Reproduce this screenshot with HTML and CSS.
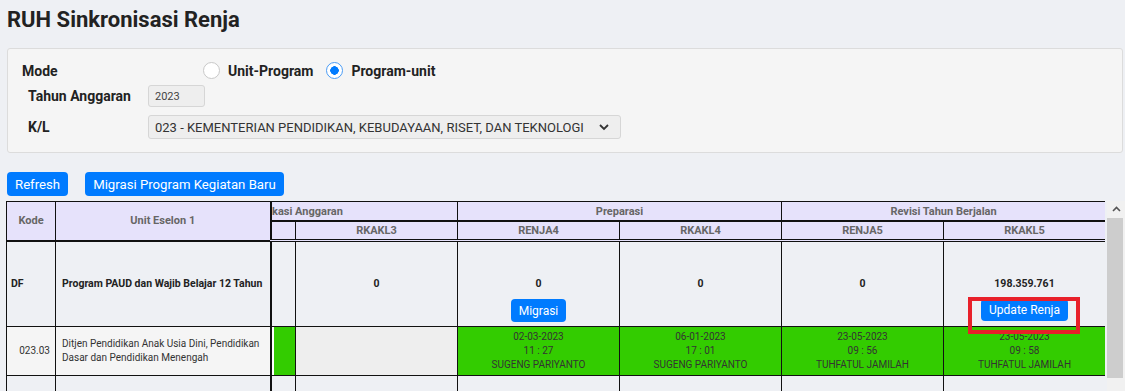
FILE: index.html
```html
<!DOCTYPE html>
<html lang="id">
<head>
    <meta charset="UTF-8">
    <meta name="viewport" content="width=device-width, initial-scale=1.0">
    <title>RUH Sinkronisasi Renja</title>
    <link rel="stylesheet" href="styles.css">
</head>
<body>

    <h1 class="pageTitle">RUH Sinkronisasi Renja</h1>

    <div class="filterPanel">
        <div class="modeRow">
            <span class="modeLabel">Mode</span>
            <label class="radioOpt"><input type="radio" name="mode"> Unit-Program</label>
            <label class="radioOpt"><input type="radio" name="mode" checked> Program-unit</label>
        </div>
        <div class="fieldRow">
            <label class="fieldLabel">Tahun Anggaran</label>
            <input type="text" class="yearInput" value="2023" readonly>
        </div>
        <div class="fieldRow">
            <label class="fieldLabel">K/L</label>
            <div class="selectBox">
                <span>023 - KEMENTERIAN PENDIDIKAN, KEBUDAYAAN, RISET, DAN TEKNOLOGI</span>
                <svg width="12" height="8" viewBox="0 0 12 8"><path d="M2 2l4 4 4-4" fill="none" stroke="#333" stroke-width="1.8"/></svg>
            </div>
        </div>
    </div>

    <div class="actions">
        <button class="btn">Refresh</button>
        <button class="btn">Migrasi Program Kegiatan Baru</button>
    </div>

    <div class="gridWrap">
        <div class="gridScroll">
            <table class="grid">
                <colgroup>
                    <col style="width:49px">
                    <col style="width:215px">
                    <col style="width:25px">
                    <col style="width:162px">
                    <col style="width:162px">
                    <col style="width:162px">
                    <col style="width:162px">
                    <col style="width:162px">
                </colgroup>
                <thead>
                    <tr class="headTop">
                        <th rowspan="2">Kode</th>
                        <th rowspan="2" class="frozenEdge">Unit Eselon 1</th>
                        <th colspan="2" class="clipHead"><div><span>Alokasi Anggaran</span></div></th>
                        <th colspan="2">Preparasi</th>
                        <th colspan="2">Revisi Tahun Berjalan</th>
                    </tr>
                    <tr class="headSub">
                        <th></th>
                        <th>RKAKL3</th>
                        <th>RENJA4</th>
                        <th>RKAKL4</th>
                        <th>RENJA5</th>
                        <th>RKAKL5</th>
                    </tr>
                </thead>
                <tbody>
                    <tr class="programRow">
                        <td class="kode">DF</td>
                        <td class="unit frozenEdge">Program PAUD dan Wajib Belajar 12 Tahun</td>
                        <td></td>
                        <td class="amount"><div class="val">0</div></td>
                        <td class="amount"><div class="val">0</div><button class="btn btnSmall">Migrasi</button></td>
                        <td class="amount"><div class="val">0</div></td>
                        <td class="amount"><div class="val">0</div></td>
                        <td class="amount"><div class="val">198.359.761</div><div class="marked"><button class="btn btnSmall">Update Renja</button></div></td>
                    </tr>
                    <tr class="unitRow">
                        <td class="kode">023.03</td>
                        <td class="unit frozenEdge">Ditjen Pendidikan Anak Usia Dini, Pendidikan Dasar dan Pendidikan Menengah</td>
                        <td class="ok gap"></td>
                        <td class="empty"></td>
                        <td class="ok">02-03-2023<br>11 : 27<br>SUGENG PARIYANTO</td>
                        <td class="ok">06-01-2023<br>17 : 01<br>SUGENG PARIYANTO</td>
                        <td class="ok">23-05-2023<br>09 : 56<br>TUHFATUL JAMILAH</td>
                        <td class="ok">23-05-2023<br>09 : 58<br>TUHFATUL JAMILAH</td>
                    </tr>
                    <tr class="blankRow">
                        <td></td>
                        <td class="frozenEdge"></td>
                        <td></td>
                        <td></td>
                        <td></td>
                        <td></td>
                        <td></td>
                        <td></td>
                    </tr>
                </tbody>
            </table>
        </div>
        <div class="scrollbar">
            <div class="sbArrow">
                <svg width="9" height="6" viewBox="0 0 9 6"><path d="M1 5l3.5-3.5L8 5" fill="none" stroke="#555" stroke-width="1.6"/></svg>
            </div>
            <div class="sbThumb"></div>
        </div>
    </div>

</body>
</html>
```

FILE: styles.css
```css
body {
    font-family: Roboto, "Liberation Sans", sans-serif;
    margin: 0;
    padding: 0 0 0 6px;
    background-color: #eef0f4;
    color: #222222;
    height: 391px;
    overflow: hidden;
}

.pageTitle {
    font-size: 22px;
    font-weight: 700;
    line-height: 28px;
    margin: 0;
    padding: 6px 0 0 1px;
    height: 42px;
    color: #222222;
}

.filterPanel {
    margin: 0 2px 0 1px;
    padding: 13px 14px 13px 14px;
    background-color: #f5f5f5;
    border: 1px solid #dcdcdc;
    border-radius: 3px;
}

.modeRow {
    display: flex;
    align-items: center;
    height: 17px;
    font-size: 14px;
    font-weight: 700;
}

.modeLabel {
    width: 181px;
}

.radioOpt {
    display: flex;
    align-items: center;
    gap: 8px;
    margin-right: 13px;
}

.radioOpt input {
    appearance: none;
    width: 17px;
    height: 17px;
    margin: 0;
    border: 1px solid #c8c8c8;
    border-radius: 50%;
    background: #ffffff;
}

.radioOpt input:checked {
    border-color: #4a9cf5;
    background: radial-gradient(circle, #007bff 0 4px, #ffffff 4.5px);
}

.fieldRow {
    display: flex;
    align-items: center;
    padding-left: 6px;
    margin-top: 6px;
}

.fieldRow + .fieldRow {
    margin-top: 8px;
}

.fieldLabel {
    width: 120px;
    font-size: 14px;
    font-weight: 700;
}

.yearInput {
    width: 57px;
    height: 22px;
    box-sizing: border-box;
    padding: 0 6px;
    font-family: Roboto, sans-serif;
    font-size: 11px;
    color: #444444;
    background: #eeeeee;
    border: 1px solid #d6d6d6;
    border-radius: 3px;
}

.selectBox {
    width: 473px;
    height: 24px;
    box-sizing: border-box;
    display: flex;
    align-items: center;
    justify-content: space-between;
    padding: 0 10px 0 6px;
    font-size: 13px;
    color: #333333;
    background: #eeeeee;
    border: 1px solid #d6d6d6;
    border-radius: 3px;
}

.actions {
    display: flex;
    gap: 17px;
    margin: 19px 0 0 1px;
}

.btn {
    font-family: Roboto, sans-serif;
    font-size: 13.2px;
    color: #ffffff;
    background-color: #007bff;
    border: none;
    border-radius: 4px;
    height: 24px;
    padding: 0 8px;
}

/* Grid */
.gridWrap {
    display: flex;
    margin-top: 5px;
    height: 190px;
}

.gridScroll {
    width: 1099px;
    overflow: hidden;
}

.grid {
    width: 1099px;
    table-layout: fixed;
    border-collapse: collapse;
    font-size: 10.5px;
}

.grid th,
.grid td {
    border: 1px solid #111111;
    padding: 0;
    text-align: center;
}

.grid th {
    background-color: #e6e2fb;
    color: #666666;
    font-weight: 700;
    font-size: 11px;
}

.headTop th {
    height: 18px;
    border-bottom-width: 2px;
}

.headSub th {
    height: 17px;
    border-bottom: 3px double #111111;
}

.frozenEdge {
    border-right: 2px solid #111111 !important;
}

.clipHead div {
    overflow: hidden;
    white-space: nowrap;
    text-align: left;
}

.clipHead span {
    margin-left: -16px;
}

.programRow td {
    font-weight: 700;
    color: #222222;
}

.kode {
    text-align: left !important;
    padding-left: 4px !important;
}

.unit {
    text-align: left !important;
    padding: 0 6px !important;
}

.amount {
    vertical-align: top;
    padding: 35px 0 4px 0 !important;
    height: 84px;
    box-sizing: border-box;
}

.val {
    line-height: 14px;
    height: 14px;
}

.btnSmall {
    display: block;
    font-size: 12px;
    height: 23px;
    margin: 8px auto 0 auto;
}

.marked {
    position: relative;
    width: fit-content;
    margin: 0 auto;
}

.marked .btnSmall {
    height: 22px;
}

/* annotation frame round the button */
.marked::after {
    content: "";
    position: absolute;
    top: -2px;
    left: -13px;
    right: -12px;
    bottom: -13px;
    border: 4px solid #e8202a;
}

.unitRow td {
    height: 48px;
    font-size: 10px;
    line-height: 14px;
    color: #333333;
    background-color: #f5f5f5;
}

.unitRow .kode {
    text-align: right !important;
    padding-right: 5px !important;
}

.unitRow .ok {
    background-color: #33cc00;
}

.unitRow .gap {
    box-shadow: inset 2px 0 0 #ffffff;
}

.unitRow .empty {
    background-color: #eeeeee;
}

.blankRow td {
    height: 40px;
}

/* Scrollbar */
.scrollbar {
    width: 18px;
    margin-left: 2px;
    background-color: #f1f1f1;
}

.sbArrow {
    height: 15px;
    display: flex;
    justify-content: center;
    align-items: center;
}

.sbThumb {
    width: 16px;
    height: 160px;
    margin-top: 2px;
    background-color: #cdcdcd;
}
```
